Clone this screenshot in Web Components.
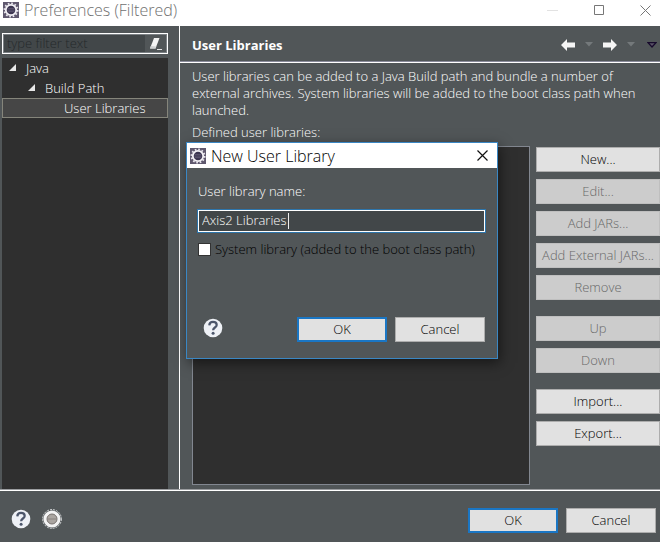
<!DOCTYPE html>
<html lang="en">
<head>
<meta charset="utf-8">
<title>Preferences (Filtered)</title>
<style>
html, body { margin: 0; height: 100%; }
body { font: 300 13px/17px "Open Sans", "Noto Sans", sans-serif; color: #fff; background: #515658; overflow: hidden; }
</style>
</head>
<body>
<preferences-window></preferences-window>
<script>
function define(name, html) {
  const template = document.createElement('template');
  template.innerHTML = '<style>*{box-sizing:border-box}button,input{font:inherit;color:inherit}</style>' + html;
  customElements.define(name, class extends HTMLElement {
    constructor() {
      super();
      this.attachShadow({ mode: 'open' }).append(template.content.cloneNode(true));
    }
    connectedCallback() {
      const button = this.shadowRoot.querySelector('button[data-main]');
      if (button) button.disabled = this.hasAttribute('disabled');
    }
  });
}

define('gear-icon', `
<style>:host{display:block;width:16px;height:16px}svg{display:block}</style>
<svg width="16" height="16" viewBox="0 0 16 16" aria-hidden="true">
  <rect width="16" height="16" fill="#5f586e"/>
  <circle cx="8" cy="8" r="6.600" fill="none" stroke="#e9e7ee" stroke-width="1.800" stroke-dasharray="1.700 1.756"/>
  <circle cx="8" cy="8" r="5.200" fill="#3b3550" stroke="#f4f2f6" stroke-width="1.800"/>
  <path d="M4.500 6.600h7M4.300 8.100h7.400M4.500 9.600h7" stroke="#68617b" stroke-width=".7"/>
</svg>`);

define('help-icon', `
<style>:host{display:block}button{display:block;padding:0;border:0;background:none}svg{display:block}</style>
<button aria-label="Help"><svg width="20" height="20" viewBox="0 0 20 20" aria-hidden="true">
  <circle cx="10" cy="10" r="9.300" fill="#eef1f6"/>
  <path d="M6.300 7.400C6.400 4.900 7.900 3.900 10 3.900c2.200 0 3.700 1.100 3.700 3 0 2.600-3.600 2.600-3.600 5.300" fill="none" stroke="#4c566b" stroke-width="2.200"/>
  <circle cx="10.100" cy="15.300" r="1.500" fill="#4c566b"/>
</svg></button>`);

define('push-button', `
<style>
:host{display:block}
button{display:block;width:100%;height:25px;padding:0 2px;border:1px solid #adadad;background:#e1e1e1;color:#000;line-height:17px;text-align:center;white-space:nowrap}
button:disabled{background:#cccccc;border-color:#bfbfbf;color:#686868}
:host([default]) button{border:2px solid #1a76c4}
</style>
<button data-main><slot></slot></button>`);

define('title-bar', `
<style>
:host{display:flex;align-items:center;gap:5px;height:var(--bar-height,26px);padding:var(--bar-padding,0 0 6px 3px);background:#fff;color:var(--bar-color,#707070);font-size:16px;line-height:20px}
h1{flex:1;margin:0;font:inherit}
</style>
<gear-icon></gear-icon><h1><slot></slot></h1><slot name="controls"></slot>`);

define('window-controls', `
<style>:host{display:flex;margin-right:-8px}button{width:46px;height:20px;padding:0;border:0;background:none;display:grid;place-items:center}
svg{display:block}</style>
<button aria-label="Minimize"><svg width="12" height="12" fill="none" stroke="#e2e2e2"><path d="M0 6.500h11"/></svg></button>
<button aria-label="Maximize"><svg width="11" height="11" fill="none" stroke="#777"><path d="M.5.5h9v9h-9z"/></svg></button>
<button aria-label="Close"><svg width="11" height="11" fill="none" stroke="#777"><path d="M.5.5l10 10M10.500.5l-10 10"/></svg></button>`);

define('tree-filter', `
<style>
:host{display:flex;height:21px;border:1px solid #fff;outline:1px solid #7b8084;outline-offset:-2px;background:#424749}
input{flex:1;min-width:0;padding:0 0 0 4px;border:0;background:none;outline:0}
input::placeholder{color:#25292b;opacity:1}
button{width:22px;padding:0;border:0;background:#515658;display:grid;place-items:center}
svg{display:block}
</style>
<input aria-label="Filter" placeholder="type filter text">
<button aria-label="Clear"><svg width="14" height="14" viewBox="0 0 14 14" aria-hidden="true"><path d="M5 1h5.500L6.500 11.500H1z" fill="#f3f3f3"/><path d="M1.800 9l5.600.4-.8 2.100H1z" fill="#cfd1d2"/><path d="M8 12.500h5" stroke="#e5e5e5"/></svg></button>`);

define('tree-item', `
<style>
:host{display:flex;align-items:center;gap:9px;height:20px;padding-left:calc(6px + var(--level,0) * 19px);border:1px solid transparent;line-height:17px}
:host([leaf]) svg{visibility:hidden}
:host([aria-selected=true]){background:#464646;border-color:#85857b;color:#fff}
svg{display:block}
</style>
<svg width="8" height="8" aria-hidden="true"><path d="M7 0v7H0z" fill="#e8e8e8"/></svg><span><slot></slot></span>`);

define('preference-tree', `
<style>:host{display:block;flex:1;background:#2f2f2f;color:#fff}</style>
<div role="tree" aria-label="Preference pages">
  <tree-item role="treeitem" aria-expanded="true">Java</tree-item>
  <tree-item role="treeitem" aria-expanded="true" style="--level:1">Build Path</tree-item>
  <tree-item role="treeitem" aria-selected="true" leaf style="--level:2">User Libraries</tree-item>
</div>`);

define('page-header', `
<style>
:host{display:flex;align-items:center;justify-content:space-between;height:37px;padding:1px 0 0 12px;border-bottom:1px solid #fff;box-shadow:inset 0 -1px #8b8c9c;color:#fff}
h2{margin:0;font:inherit;font-weight:700;padding-top:1px}
nav{display:flex;margin-right:-2px}
button{height:20px;width:21px;padding:0;border:0;background:none;display:grid;place-items:center}
svg{display:block}
</style>
<h2><slot></slot></h2>
<nav aria-label="History">
  <button aria-label="Back"><svg width="14" height="12"><path d="M0 6L6 0v3.500h8v5H6V12z" fill="#f5f5f5"/></svg></button>
  <button aria-label="Back history"><svg width="8" height="5"><path d="M0 0h8L4 4.500z" fill="#74797b"/></svg></button>
  <button aria-label="Forward"><svg width="14" height="12"><path d="M14 6L8 0v3.500H0v5h8V12z" fill="#f5f5f5"/></svg></button>
  <button aria-label="Forward history"><svg width="8" height="5"><path d="M0 0h8L4 4.500z" fill="#74797b"/></svg></button>
  <button aria-label="View menu"><svg width="10" height="6"><path d="M1 .7h8L5 5z" fill="#595266" stroke="#170a2c" stroke-width="1.300"/></svg></button>
</nav>`);

define('user-libraries-page', `
<style>
:host{display:flex;flex-direction:column;min-width:0}
section{flex:1;display:flex;flex-direction:column;padding:5px 0 5px 12px}
p{margin:0 0 5px}
.body{flex:1;display:grid;grid-template-columns:1fr 124px;gap:6px;margin-top:5px}
.list{border:1px solid #828790;background:#2f2f2f}
.actions{display:flex;flex-direction:column;gap:7px;padding-top:1px}
.group{margin-top:9px}
</style>
<page-header>User Libraries</page-header>
<section>
  <p>User libraries can be added to a Java Build path and bundle a number of external archives. System libraries will be added to the boot class path when launched.</p>
  <div id="defined">Defined user libraries:</div>
  <div class="body">
    <div class="list" role="tree" aria-labelledby="defined"></div>
    <div class="actions">
      <push-button>New...</push-button>
      <push-button disabled>Edit...</push-button>
      <push-button disabled>Add JARs...</push-button>
      <push-button disabled>Add External JARs...</push-button>
      <push-button disabled>Remove</push-button>
      <push-button disabled class="group">Up</push-button>
      <push-button disabled>Down</push-button>
      <push-button class="group">Import...</push-button>
      <push-button>Export...</push-button>
    </div>
  </div>
</section>`);

define('window-footer', `
<style>
:host{display:flex;align-items:flex-start;gap:8px;height:52px;padding:17px 4px 0 11px;border-top:1px solid #fff;box-shadow:0 -1px #9b9da0}
.record{padding:0;border:0;background:none;margin:0 auto 0 3px}
svg{display:block}
push-button{width:90px}
help-icon,.record{padding-top:1px}
</style>
<help-icon></help-icon>
<button class="record" aria-label="Record"><svg width="20" height="20" viewBox="0 0 20 20"><circle cx="10" cy="10" r="9.400" fill="none" stroke="#d5d8da" stroke-dasharray="2 1"/><circle cx="10" cy="10" r="8.600" fill="#f3f3f4"/><circle cx="10" cy="10" r="5" fill="#aaa5a1" stroke="#77716e"/><path d="M6 10h8" stroke="#88827e"/></svg></button>
<push-button default>OK</push-button>
<push-button>Cancel</push-button>`);

define('new-library-dialog', `
<style>
:host{position:absolute;left:186px;top:142px;width:312px;border:1px solid #3a87c4;background:#515658;box-shadow:2px 4px 12px rgba(0,0,0,.5)}
title-bar{--bar-color:#000;--bar-padding:0 7px 0 3px;--bar-height:25px}
.close{width:16px;height:16px;padding:0;border:0;background:none;display:grid;place-items:center}
svg{display:block}
form{display:flex;flex-direction:column;padding:15px 12px 16px 11px}
label{display:block}
.name{height:22px;margin:10px 0 9px;padding:0 3px 2px;border:1px solid #fff;outline:1px solid #2d75ab;color:#fff;background:linear-gradient(#eee,#eee) 89px 2px/1px 16px no-repeat #424749}
.check{display:flex;align-items:center;gap:4px;color:#000;white-space:nowrap}
.check input{appearance:none;width:13px;height:13px;margin:0;border:1px solid #333;background:#fff}
footer{display:flex;align-items:flex-start;gap:8px;margin-top:59px;padding-left:5px}
help-icon{margin-right:auto;padding-top:1px}
push-button{width:90px}
</style>
<title-bar>New User Library<button slot="controls" class="close" aria-label="Close"><svg width="11" height="11" fill="none" stroke="#111" stroke-width="1.200"><path d="M.5.5l10 10M10.500.5l-10 10"/></svg></button></title-bar>
<form onsubmit="return false">
  <label for="name">User library name:</label>
  <input class="name" id="name" value="Axis2 Libraries">
  <label class="check"><input type="checkbox">System library (added to the boot class path)</label>
  <footer><help-icon></help-icon><push-button default>OK</push-button><push-button>Cancel</push-button></footer>
</form>`);

define('preferences-window', `
<style>
:host{display:flex;flex-direction:column;min-height:100vh}
main{flex:1;display:grid;grid-template-columns:179px 1fr}
aside{display:flex;flex-direction:column;gap:4px;padding:7px 11px 0 2px}
user-libraries-page{border-left:1px solid #fff}
</style>
<title-bar>Preferences (Filtered)<window-controls slot="controls"></window-controls></title-bar>
<main>
  <aside><tree-filter></tree-filter><preference-tree></preference-tree></aside>
  <user-libraries-page></user-libraries-page>
</main>
<window-footer></window-footer>
<new-library-dialog role="dialog" aria-label="New User Library"></new-library-dialog>`);
</script>
</body>
</html>
